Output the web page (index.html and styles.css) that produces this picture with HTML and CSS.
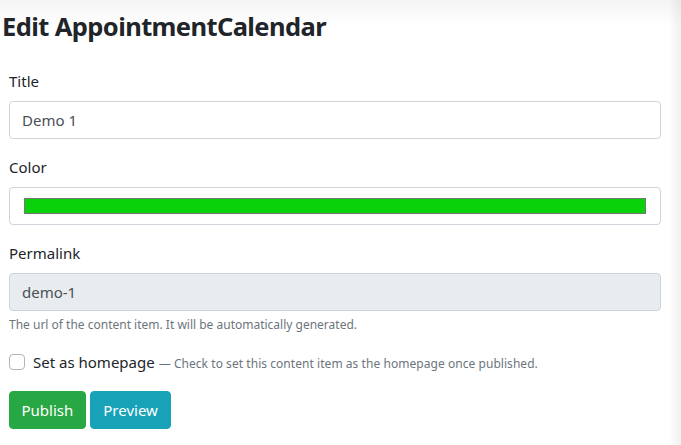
FILE: index.html
```html
<!DOCTYPE html>
<html lang="en">
<head>
<meta charset="utf-8">
<title>Edit AppointmentCalendar</title>
<link rel="stylesheet" href="styles.css">
</head>
<body>
<div class="page">
  <h2 class="page-title">Edit AppointmentCalendar</h2>
  <form class="edit-form">
    <div class="form-group">
      <label class="form-label" for="title">Title</label>
      <input class="form-control" id="title" type="text" value="Demo 1">
    </div>
    <div class="form-group">
      <label class="form-label">Color</label>
      <div class="form-control color-control"><span class="color-swatch"></span></div>
    </div>
    <div class="form-group">
      <label class="form-label" for="permalink">Permalink</label>
      <input class="form-control" id="permalink" type="text" value="demo-1" disabled>
      <small class="form-text">The url of the content item. It will be automatically generated.</small>
    </div>
    <div class="form-check">
      <span class="check-box"></span>
      <span class="check-label">Set as homepage</span>
      <small class="check-hint">— Check to set this content item as the homepage once published.</small>
    </div>
    <div class="actions">
      <button type="button" class="btn btn-success">Publish</button>
      <button type="button" class="btn btn-info">Preview</button>
    </div>
  </form>
</div>
</body>
</html>
```

FILE: styles.css
```css
html, body {
  margin: 0;
  padding: 0;
}
body {
  width: 681px;
  height: 445px;
  overflow: hidden;
  font-family: "Noto Sans", "Open Sans", sans-serif;
  color: #212529;
  background:
    linear-gradient(to right, rgba(0,0,0,0) 0, rgba(0,0,0,0) 670px, rgba(0,0,0,0.03) 674px, rgba(0,0,0,0.05) 681px),
    linear-gradient(to bottom, #f4f4f4 0, #ffffff 26px);
}
.page {
  padding: 6px 20px 0 2px;
}
.page-title {
  margin: 0;
  font-size: 25.5px;
  font-weight: 700;
  line-height: 40px;
  letter-spacing: -0.6px;
  color: #212529;
}
.edit-form {
  padding: 23px 0 0 7px;
}
.form-group {
  margin-bottom: 16px;
}
.form-label {
  display: block;
  font-size: 15px;
  line-height: 24px;
  margin-bottom: 8px;
}
.form-control {
  display: block;
  box-sizing: border-box;
  width: 652px;
  height: 38px;
  padding: 6px 12px;
  font-family: inherit;
  font-size: 15px;
  line-height: 24px;
  color: #495057;
  background: #fff;
  border: 1px solid #ced4da;
  border-radius: 4px;
  margin: 0;
}
.form-control:disabled {
  background: #e9ecef;
  opacity: 1;
}
.color-control {
  padding: 10px 14px 10px 14px;
}
.color-swatch {
  display: block;
  height: 16px;
  box-sizing: border-box;
  background: #0ad20a;
  border: 1px solid #767676;
}
.form-text {
  display: block;
  margin-top: 4px;
  font-size: 12px;
  line-height: 19px;
  color: #6c757d;
}
.form-check {
  display: flex;
  align-items: center;
  height: 24px;
  margin-bottom: 17px;
}
.check-box {
  width: 16px;
  height: 16px;
  box-sizing: border-box;
  border: 1px solid #adb5bd;
  border-radius: 4px;
  background: #fff;
  margin-right: 8px;
}
.check-label {
  font-size: 15px;
  line-height: 24px;
  margin-right: 4px;
}
.check-hint {
  font-size: 12px;
  letter-spacing: 0.05px;
  color: #6c757d;
  padding-top: 2px;
}
.actions {
  display: flex;
  gap: 4px;
}
.btn {
  height: 38px;
  padding: 6px 11.5px;
  font-family: inherit;
  font-size: 15px;
  line-height: 24px;
  color: #fff;
  border: 1px solid transparent;
  border-radius: 4px;
}
.btn-success {
  background: #28a745;
  border-color: #28a745;
}
.btn-info {
  padding: 6px 12.5px;
  background: #17a2b8;
  border-color: #17a2b8;
}
```
